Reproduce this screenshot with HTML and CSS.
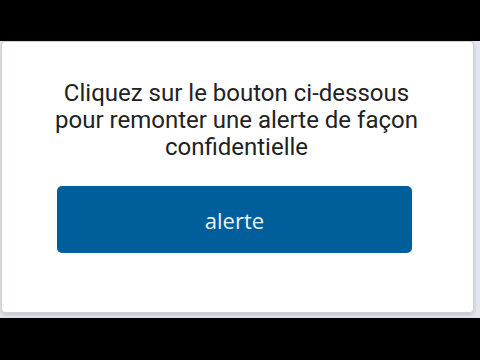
FILE: index.html
```html
<!DOCTYPE html>
<html lang="fr">
<head>
    <meta charset="UTF-8">
    <meta name="viewport" content="width=device-width, initial-scale=1.0">
    <title>Alerte</title>
    <link rel="stylesheet" href="styles.css">
</head>
<body>
    <div class="frame">
        <div class="card">
            <p class="intro">Cliquez sur le bouton ci-dessous<br>pour remonter une alerte de façon<br>confidentielle</p>
            <button class="alert-btn">alerte</button>
        </div>
    </div>
</body>
</html>
```

FILE: styles.css
```css
body {
    margin: 0;
    height: 360px;
    background-color: #000;
    overflow: hidden;
}
.frame {
    margin-top: 41px;
    height: 277px;
    background-color: #e4e7ee;
}
.card {
    box-sizing: border-box;
    margin-left: 1px;
    width: 473px;
    height: 272px;
    background-color: #fff;
    border: 1px solid #d0d0d0;
    border-radius: 4px;
    box-shadow: 0 2px 4px rgba(120, 130, 160, 0.35);
    display: flex;
    flex-direction: column;
    align-items: center;
    padding-top: 38px;
}
.intro {
    margin: 0 0 0 -2px;
    font-family: Roboto, sans-serif;
    font-size: 24px;
    line-height: 27px;
    color: #222;
    text-align: center;
}
.alert-btn {
    margin: 25px 0 0 -6px;
    width: 355px;
    height: 67px;
    border: none;
    border-radius: 5px;
    background-color: #005f9b;
    color: #eaf4ff;
    font-family: "Open Sans", sans-serif;
    font-size: 22px;
    cursor: pointer;
}
```
